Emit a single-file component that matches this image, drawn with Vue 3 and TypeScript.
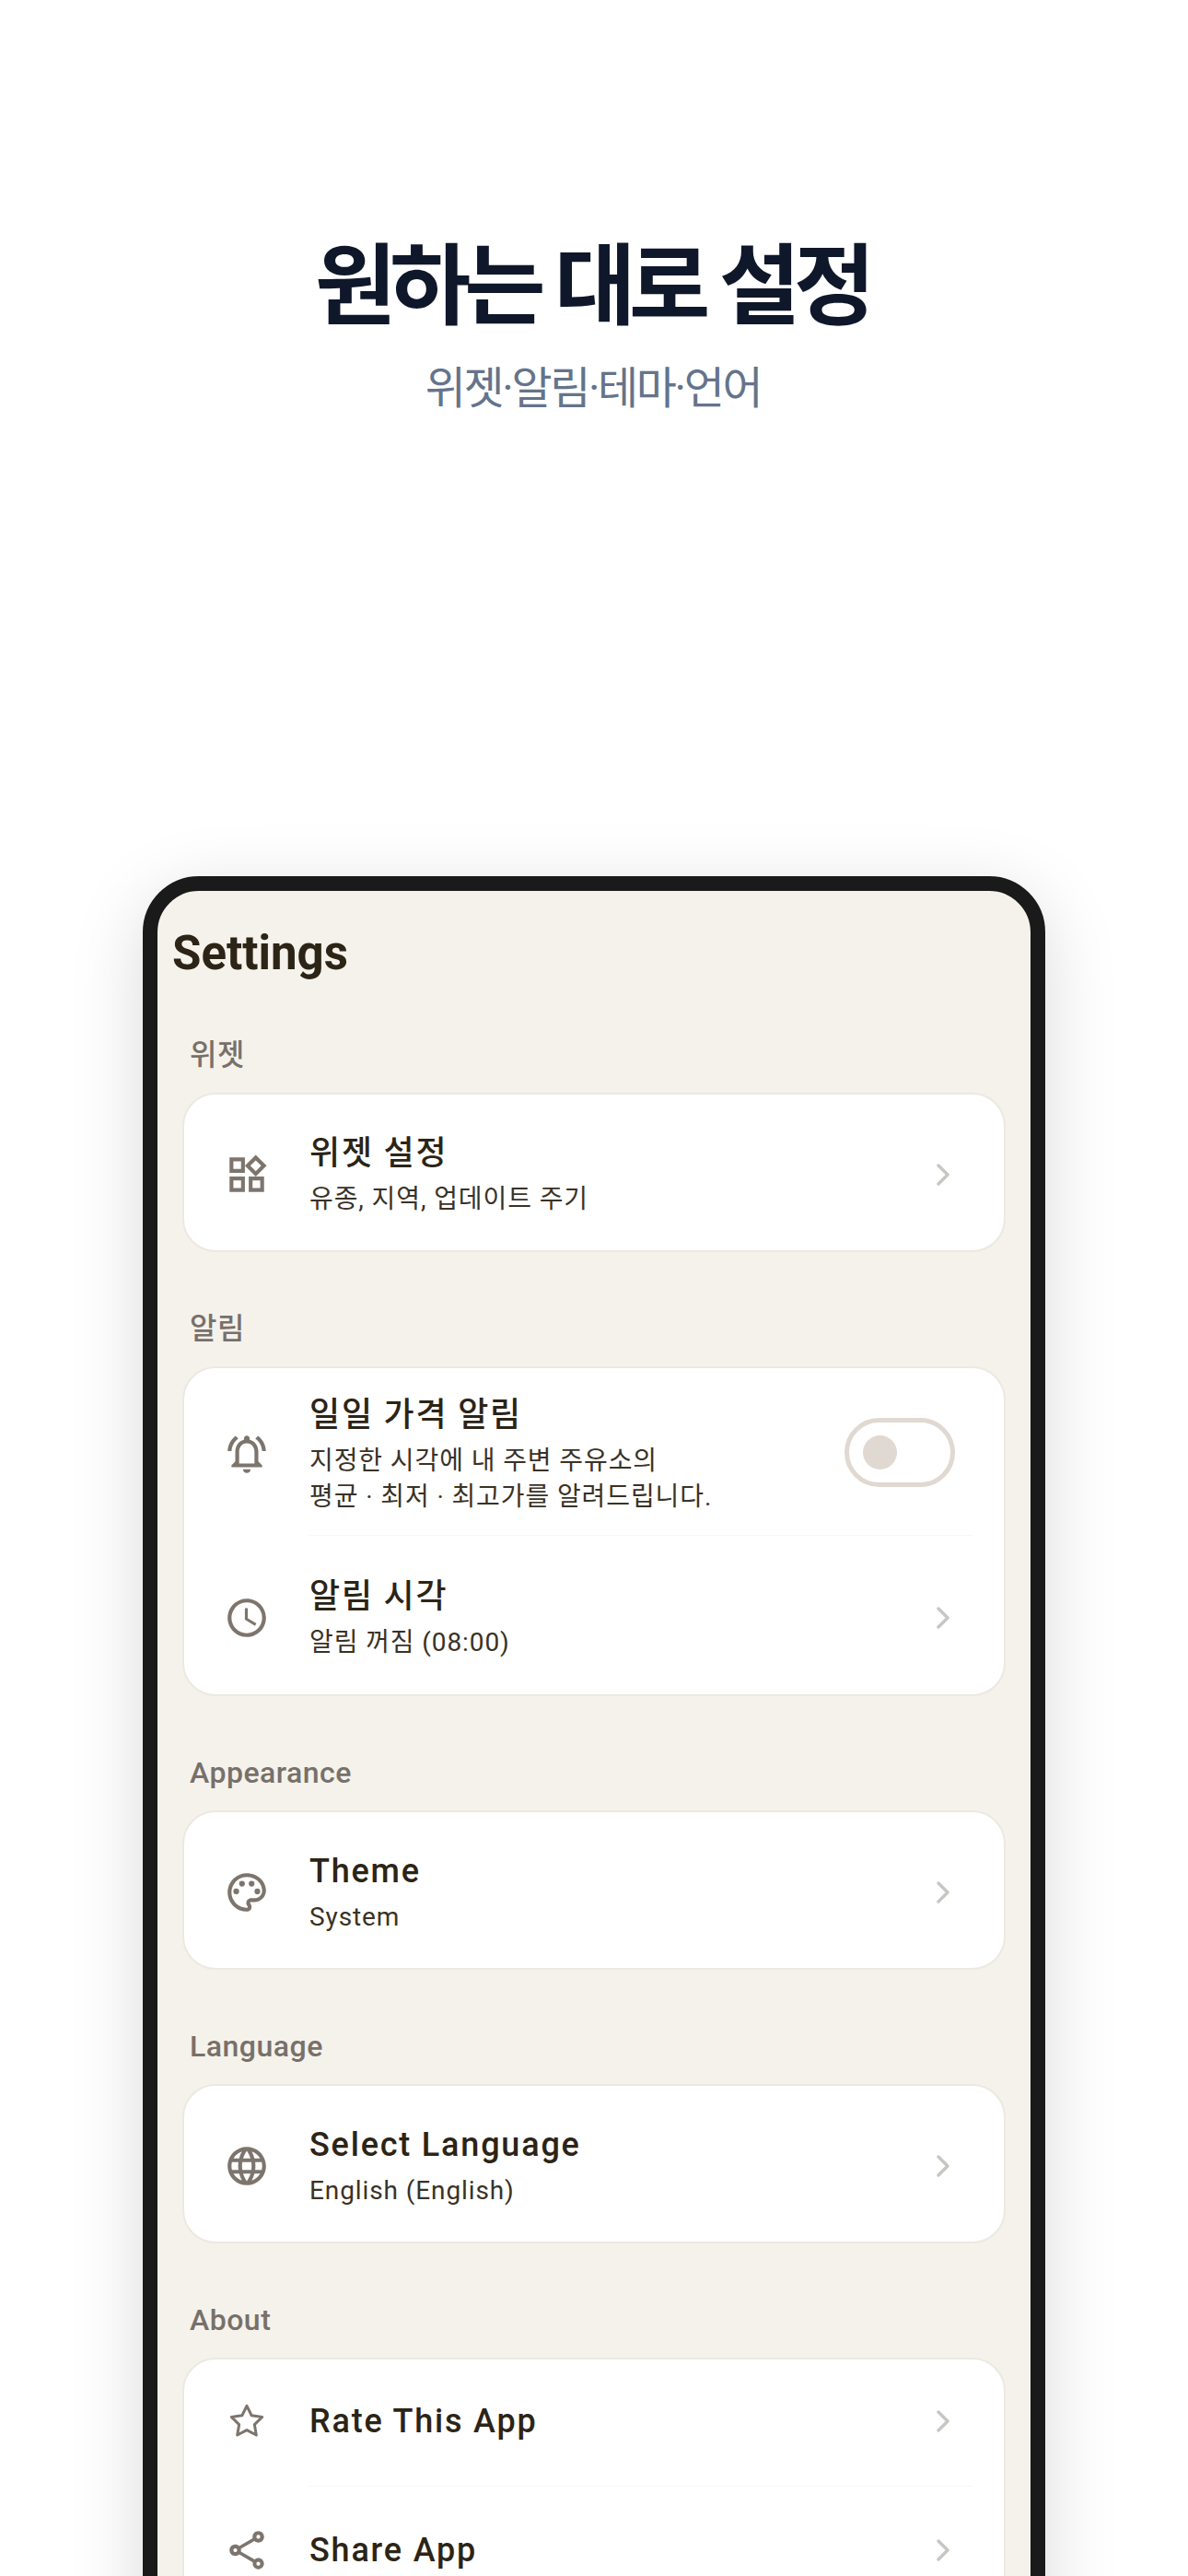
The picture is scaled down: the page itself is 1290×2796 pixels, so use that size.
<script setup lang="ts">
type Row = {
  icon: string
  title: string
  sub?: string[]
  toggle?: boolean
}

type Section = {
  label: string
  rows: Row[]
}

const sections: Section[] = [
  {
    label: '위젯',
    rows: [{ icon: 'widgets', title: '위젯 설정', sub: ['유종, 지역, 업데이트 주기'] }],
  },
  {
    label: '알림',
    rows: [
      {
        icon: 'bell',
        title: '일일 가격 알림',
        sub: ['지정한 시각에 내 주변 주유소의', '평균 · 최저 · 최고가를 알려드립니다.'],
        toggle: true,
      },
      { icon: 'clock', title: '알림 시각', sub: ['알림 꺼짐 (08:00)'] },
    ],
  },
  {
    label: 'Appearance',
    rows: [{ icon: 'palette', title: 'Theme', sub: ['System'] }],
  },
  {
    label: 'Language',
    rows: [{ icon: 'globe', title: 'Select Language', sub: ['English (English)'] }],
  },
  {
    label: 'About',
    rows: [
      { icon: 'star', title: 'Rate This App' },
      { icon: 'share', title: 'Share App' },
    ],
  },
]

const icons: Record<string, string> = {
  widgets:
    'M16.66 4.52l2.83 2.83-2.83 2.83-2.83-2.83 2.83-2.83M9 5v4H5V5h4m10 10v4h-4v-4h4M9 15v4H5v-4h4m7.66-13.31L11 7.34 16.66 13l5.66-5.66-5.66-5.65zM11 3H3v8h8V3zm10 10h-8v8h8v-8zm-10 0H3v8h8v-8z',
  bell:
    'M7.58 4.08L6.15 2.65C3.75 4.48 2.17 7.3 2.03 10.5h2c.15-2.65 1.51-4.97 3.55-6.42zm12.39 6.42h2c-.15-3.2-1.73-6.02-4.12-7.85l-1.42 1.43c2.02 1.45 3.39 3.77 3.54 6.42zM18 11c0-3.07-1.64-5.64-4.5-6.32V4c0-.83-.67-1.5-1.5-1.5s-1.5.67-1.5 1.5v.68C7.63 5.36 6 7.92 6 11v5l-2 2v1h16v-1l-2-2v-5zm-2 6H8v-6c0-2.48 1.51-4.5 4-4.5s4 2.02 4 4.5v6zm-4 5c1.1 0 2-.9 2-2h-4c0 1.1.9 2 2 2z',
  clock:
    'M11.99 2C6.47 2 2 6.48 2 12s4.47 10 9.99 10C17.52 22 22 17.52 22 12S17.52 2 11.99 2zM12 20c-4.42 0-8-3.58-8-8s3.58-8 8-8 8 3.58 8 8-3.58 8-8 8zm.5-13H11v6l5.25 3.15.75-1.23-4.5-2.67z',
  palette:
    'M12 22C6.49 22 2 17.51 2 12S6.49 2 12 2s10 4.04 10 9c0 3.31-2.69 6-6 6h-1.77c-.28 0-.5.22-.5.5 0 .12.05.23.13.33.41.47.64 1.06.64 1.67 0 1.38-1.12 2.5-2.5 2.5zm0-18c-4.41 0-8 3.59-8 8s3.59 8 8 8c.28 0 .5-.22.5-.5 0-.16-.08-.28-.14-.35-.41-.46-.63-1.05-.63-1.65 0-1.38 1.12-2.5 2.5-2.5H16c2.21 0 4-1.79 4-4 0-3.86-3.59-7-8-7zM5 11.5a1.5 1.5 0 1 0 3 0 1.5 1.5 0 1 0-3 0zM8 7.5a1.5 1.5 0 1 0 3 0 1.5 1.5 0 1 0-3 0zM13 7.5a1.5 1.5 0 1 0 3 0 1.5 1.5 0 1 0-3 0zM16 11.5a1.5 1.5 0 1 0 3 0 1.5 1.5 0 1 0-3 0z',
  globe:
    'M11.99 2C6.47 2 2 6.48 2 12s4.47 10 9.99 10C17.52 22 22 17.52 22 12S17.52 2 11.99 2zm6.93 6h-2.95c-.32-1.25-.78-2.45-1.38-3.56 1.84.63 3.37 1.91 4.33 3.56zM12 4.04c.83 1.2 1.48 2.53 1.91 3.96h-3.82c.43-1.43 1.08-2.76 1.91-3.96zM4.26 14C4.1 13.36 4 12.69 4 12s.1-1.36.26-2h3.38c-.08.66-.14 1.32-.14 2 0 .68.06 1.34.14 2H4.26zm.82 2h2.95c.32 1.25.78 2.45 1.38 3.56-1.84-.63-3.37-1.9-4.33-3.56zm2.95-8H5.08c.96-1.66 2.49-2.93 4.33-3.56C8.81 5.55 8.35 6.75 8.03 8zM12 19.96c-.83-1.2-1.48-2.53-1.91-3.96h3.82c-.43 1.43-1.08 2.76-1.91 3.96zM14.34 14H9.66c-.09-.66-.16-1.32-.16-2 0-.68.07-1.35.16-2h4.68c.09.65.16 1.32.16 2 0 .68-.07 1.34-.16 2zm.25 5.56c.6-1.11 1.06-2.31 1.38-3.56h2.95c-.96 1.65-2.49 2.93-4.33 3.56zM16.36 14c.08-.66.14-1.32.14-2 0-.68-.06-1.34-.14-2h3.38c.16.64.26 1.31.26 2s-.1 1.36-.26 2h-3.38z',
  share:
    'M18 16.08c-.76 0-1.44.3-1.96.77L8.91 12.7c.05-.23.09-.46.09-.7s-.04-.47-.09-.7l7.05-4.11c.54.5 1.25.81 2.04.81 1.66 0 3-1.34 3-3s-1.34-3-3-3-3 1.34-3 3c0 .24.04.47.09.7L8.04 9.81C7.5 9.31 6.79 9 6 9c-1.66 0-3 1.34-3 3s1.34 3 3 3c.79 0 1.5-.31 2.04-.81l7.12 4.16c-.05.21-.08.43-.08.65 0 1.61 1.31 2.92 2.92 2.92 1.61 0 2.92-1.31 2.92-2.92s-1.31-2.92-2.92-2.92zM18 4c.55 0 1 .45 1 1s-.45 1-1 1-1-.45-1-1 .45-1 1-1zM6 13c-.55 0-1-.45-1-1s.45-1 1-1 1 .45 1 1-.45 1-1 1zm12 7.02c-.55 0-1-.45-1-1s.45-1 1-1 1 .45 1 1-.45 1-1 1z',
}
</script>

<template>
  <div class="page">
    <header class="hero">
      <h1 class="hero__title">원하는 대로 설정</h1>
      <p class="hero__sub">위젯·알림·테마·언어</p>
    </header>

    <div class="phone">
      <div class="screen">
        <h2 class="screen__title">Settings</h2>

        <section v-for="section in sections" :key="section.label" class="section">
          <div class="section__label">{{ section.label }}</div>
          <div class="card">
            <div
              v-for="row in section.rows"
              :key="row.title"
              class="row"
              :class="{ 'row--toggle': row.toggle, 'row--single': !row.sub }"
            >
              <div class="row__icon">
                <svg v-if="row.icon === 'star'" class="star" viewBox="0 0 24 24">
                  <polygon points="12 2 15.09 8.26 22 9.27 17 14.14 18.18 21.02 12 17.77 5.82 21.02 7 14.14 2 9.27 8.91 8.26 12 2" />
                </svg>
                <svg v-else viewBox="0 0 24 24">
                  <path :d="icons[row.icon]" />
                </svg>
              </div>
              <div class="row__text">
                <div class="row__title">{{ row.title }}</div>
                <div v-for="line in row.sub" :key="line" class="row__sub">{{ line }}</div>
              </div>
              <div v-if="row.toggle" class="toggle">
                <span class="toggle__thumb"></span>
              </div>
              <svg v-else class="chevron" viewBox="0 0 14 24">
                <path d="M2 2l10 10L2 22" />
              </svg>
            </div>
          </div>
        </section>
      </div>
    </div>
  </div>
</template>

<style>
html,
body {
  margin: 0;
  background: #fff;
}
</style>

<style scoped>
.page {
  width: 1290px;
  height: 2796px;
  overflow: hidden;
  background: #fff;
  font-family: Roboto, 'Noto Sans CJK KR', sans-serif;
}

.hero {
  height: 701px;
  box-sizing: border-box;
  padding-top: 253px;
  text-align: center;
}

.hero__title {
  margin: 0 5px 0 0;
  font-size: 96px;
  line-height: 116px;
  font-weight: 700;
  letter-spacing: -7.2px;
  color: #0f172a;
}

.hero__sub {
  margin: 18px 2px 0 0;
  font-size: 48px;
  line-height: 70px;
  font-weight: 400;
  letter-spacing: -2.4px;
  color: #64748b;
}

.phone {
  width: 980px;
  box-sizing: border-box;
  margin: 250px auto 0;
  border: 16px solid #1a1a1a;
  border-radius: 61px;
  box-shadow: 0 20px 80px rgba(0, 0, 0, 0.15);
  background: #f5f2eb;
  overflow: hidden;
}

.screen {
  padding: 41px 27px 200px;
  color: #2c2416;
}

.screen__title {
  margin: 0 0 0 -11px;
  font-size: 51px;
  line-height: 54px;
  font-weight: 700;
}

.section {
  margin-top: 64px;
}

.section__label {
  padding-left: 8px;
  margin-bottom: 22px;
  font-size: 32px;
  line-height: 38px;
  font-weight: 500;
  letter-spacing: 0.5px;
  color: #78706a;
}

.card {
  background: #fff;
  border: 2px solid #ece8e2;
  border-radius: 36px;
}

.row {
  display: flex;
  align-items: center;
  position: relative;
  padding: 40px 36px 35.8px 43px;
}

.row + .row {
  padding-top: 43px;
  padding-bottom: 36.7px;
}

.row + .row::before {
  content: '';
  position: absolute;
  top: 0;
  left: 135px;
  right: 34px;
  height: 1px;
  background: #f8f7f4;
}

.row--toggle {
  padding-top: 27px;
  padding-bottom: 22px;
}

.row--single {
  padding-top: 42px;
  padding-bottom: 44.7px;
}

.row--single + .row--single {
  padding-top: 45px;
  padding-bottom: 45px;
}

.row__icon {
  flex: none;
  width: 50px;
  height: 50px;
  margin-right: 43px;
  display: flex;
  align-items: center;
  justify-content: center;
}

.row__icon svg {
  width: 50px;
  height: 50px;
  fill: #7d756d;
}

.row__icon svg.star {
  width: 40px;
  height: 40px;
  fill: none;
  stroke: #7d756d;
  stroke-width: 1.8;
  stroke-linejoin: round;
}

.row__text {
  flex: 1;
  min-width: 0;
}

.row__title {
  font-size: 36px;
  line-height: 48px;
  font-weight: 500;
  letter-spacing: 1.8px;
  margin-bottom: 6px;
}

.row--single .row__title {
  margin-bottom: 0;
}

.row__sub {
  font-size: 28px;
  line-height: 39.2px;
  letter-spacing: 0.9px;
  color: #3a3226;
}

.toggle {
  flex: none;
  box-sizing: border-box;
  width: 120px;
  height: 75px;
  margin-right: 17px;
  margin-bottom: 3px;
  padding-left: 15px;
  display: flex;
  align-items: center;
  border: 5px solid #e0d9d1;
  border-radius: 38px;
}

.toggle__thumb {
  width: 37px;
  height: 37px;
  border-radius: 50%;
  background: #e0d9d1;
}

.chevron {
  flex: none;
  width: 14px;
  height: 24px;
  margin-right: 23px;
  fill: none;
  stroke: #c8c6c2;
  stroke-width: 3.4;
  stroke-linecap: round;
  stroke-linejoin: round;
}
</style>
